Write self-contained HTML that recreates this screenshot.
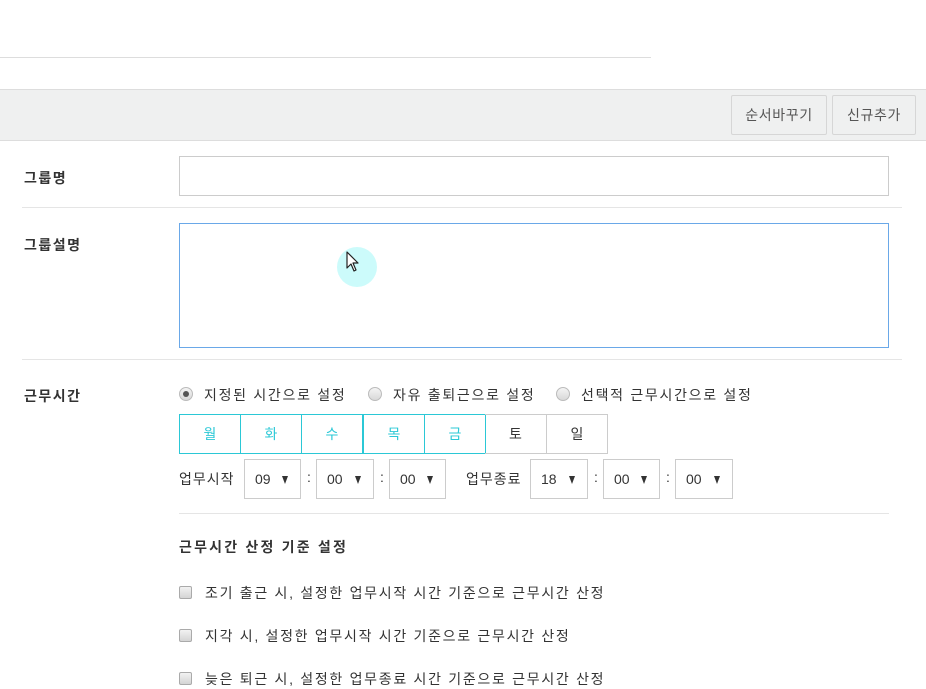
<!DOCTYPE html>
<html><head><meta charset="utf-8"><style>
*{box-sizing:border-box;margin:0;padding:0}
body{width:926px;height:689px;background:#fff;position:relative;overflow:hidden;font-family:"Liberation Sans","Noto Sans CJK KR","NanumGothic",sans-serif;font-size:14px;color:#333;letter-spacing:1.7px}
.a{position:absolute;white-space:nowrap}
.hl{position:absolute;height:1px;background:#e5e5e5}
.btn{position:absolute;top:95px;height:40px;border:1px solid #d6d6d6;background:#eff0f0;color:#555;line-height:38px;text-align:center;border-radius:2px;letter-spacing:0.6px}
.lbl{position:absolute;left:24px;font-weight:bold;color:#333;letter-spacing:1.5px}
.inp{position:absolute;left:179px;width:710px;border:1px solid #ccc;background:#fff}
.rad{position:absolute;top:387px;width:14px;height:14px;border-radius:50%;border:1px solid #bbb;background:linear-gradient(#f4f4f4,#d8d8d8)}
.day{position:absolute;top:414px;height:40px;width:62px;text-align:center;line-height:38px;border:1px solid #ccc;color:#333;letter-spacing:0}
.day.on{border-color:#2bc8d6;color:#2bc8d6}
.sel{position:absolute;top:459px;height:40px;border:1px solid #ccc;line-height:38px;padding-left:10px;letter-spacing:0;font-size:14px}
.sel:after{content:"";position:absolute;right:12px;top:16px;border-left:3.5px solid transparent;border-right:3.5px solid transparent;border-top:8px solid #333}
.col{position:absolute;top:469px}
.chk{position:absolute;left:179px;width:13px;height:13px;border:1px solid #aaa;border-radius:2px;background:linear-gradient(#f2f2f2,#d4d4d4)}
.ct{position:absolute;left:205px;white-space:nowrap}
</style></head><body>
<div class="hl" style="left:0;top:57px;width:651px;background:#ddd"></div>
<div class="a" style="left:0;top:89px;width:926px;height:52px;background:#eff0f0;border-top:1px solid #ddd;border-bottom:1px solid #ddd"></div>
<div class="btn" style="left:731px;width:96px">순서바꾸기</div>
<div class="btn" style="left:832px;width:84px">신규추가</div>

<div class="lbl" style="top:168px">그룹명</div>
<div class="inp" style="top:156px;height:40px"></div>
<div class="hl" style="left:22px;top:207px;width:880px"></div>

<div class="lbl" style="top:235px">그룹설명</div>
<div class="inp" style="top:223px;height:125px;border-color:#6aa8e8"></div>
<div class="a" style="left:337px;top:247px;width:40px;height:40px;border-radius:50%;background:#ccfbfb"></div>
<svg class="a" style="left:346px;top:251px" width="14" height="22" viewBox="0 0 14 22"><path d="M1 1 L1 17 L5 13 L8 20 L10 19 L7 12 L12 12 Z" fill="#fff" stroke="#222" stroke-width="1.2" stroke-linejoin="round"/></svg>
<div class="hl" style="left:22px;top:359px;width:880px"></div>

<div class="lbl" style="top:386px">근무시간</div>
<div class="rad" style="left:179px"><div style="position:absolute;left:3px;top:3px;width:6px;height:6px;border-radius:50%;background:#555"></div></div>
<div class="a" style="left:204px;top:385px">지정된 시간으로 설정</div>
<div class="rad" style="left:368px"></div>
<div class="a" style="left:393px;top:385px">자유 출퇴근으로 설정</div>
<div class="rad" style="left:556px"></div>
<div class="a" style="left:581px;top:385px">선택적 근무시간으로 설정</div>

<div class="day on" style="left:179px">월</div>
<div class="day on" style="left:240px">화</div>
<div class="day on" style="left:301px">수</div>
<div class="day on" style="left:363px">목</div>
<div class="day on" style="left:424px">금</div>
<div class="day" style="left:485px;border-left:none">토</div>
<div class="day" style="left:546px">일</div>

<div class="a" style="left:179px;top:469px;letter-spacing:1px">업무시작</div>
<div class="sel" style="left:244px;width:57px">09</div>
<div class="col" style="left:307px">:</div>
<div class="sel" style="left:316px;width:58px">00</div>
<div class="col" style="left:380px">:</div>
<div class="sel" style="left:389px;width:57px">00</div>
<div class="a" style="left:466px;top:469px;letter-spacing:1px">업무종료</div>
<div class="sel" style="left:530px;width:58px">18</div>
<div class="col" style="left:594px">:</div>
<div class="sel" style="left:603px;width:57px">00</div>
<div class="col" style="left:666px">:</div>
<div class="sel" style="left:675px;width:58px">00</div>
<div class="hl" style="left:179px;top:513px;width:710px"></div>

<div class="a" style="left:179px;top:537px;font-weight:bold;letter-spacing:2.2px">근무시간 산정 기준 설정</div>
<div class="chk" style="top:586px"></div><div class="ct" style="top:583px">조기 출근 시, 설정한 업무시작 시간 기준으로 근무시간 산정</div>
<div class="chk" style="top:629px"></div><div class="ct" style="top:626px">지각 시, 설정한 업무시작 시간 기준으로 근무시간 산정</div>
<div class="chk" style="top:672px"></div><div class="ct" style="top:669px">늦은 퇴근 시, 설정한 업무종료 시간 기준으로 근무시간 산정</div>
</body></html>
